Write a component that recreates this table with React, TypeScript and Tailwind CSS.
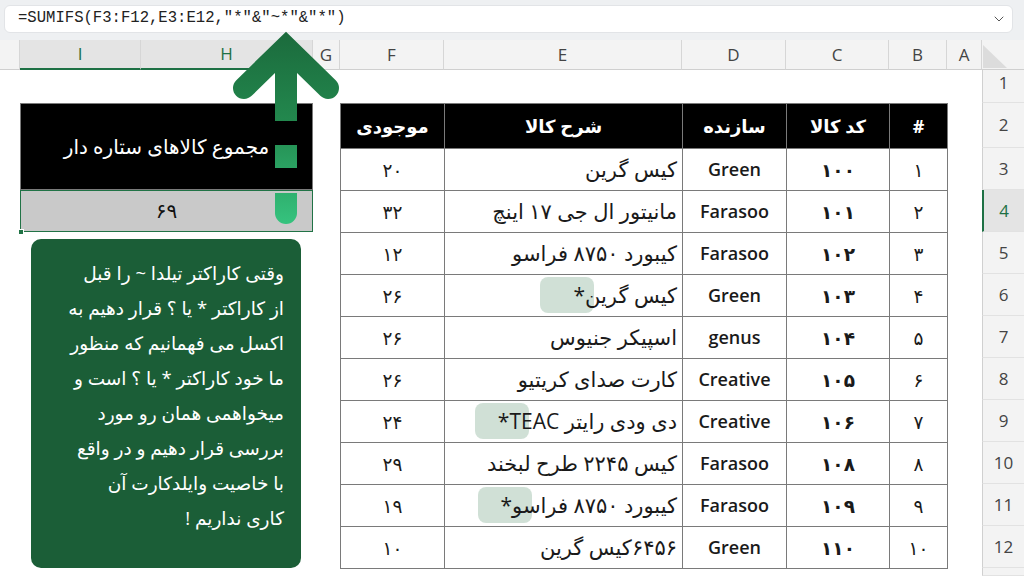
import { ChevronDown } from "lucide-react";

const cols = ["", "I", "H", "G", "F", "E", "D", "C", "B", "A"];
const selectedCols = ["I", "H"];

const rows = [
  { n: "۱", code: "۱۰۰", maker: "Green", desc: "کیس گرین", qty: "۲۰" },
  { n: "۲", code: "۱۰۱", maker: "Farasoo", desc: "مانیتور ال جی ۱۷ اینچ", qty: "۳۲" },
  { n: "۳", code: "۱۰۲", maker: "Farasoo", desc: "کیبورد ۸۷۵۰ فراسو", qty: "۱۲" },
  { n: "۴", code: "۱۰۳", maker: "Green", desc: "کیس گرین*", qty: "۲۶", mark: -33 },
  { n: "۵", code: "۱۰۴", maker: "genus", desc: "اسپیکر جنیوس", qty: "۲۶" },
  { n: "۶", code: "۱۰۵", maker: "Creative", desc: "کارت صدای کریتیو", qty: "۲۶" },
  { n: "۷", code: "۱۰۶", maker: "Creative", desc: "دی ودی رایتر TEAC*", qty: "۲۴", mark: -23 },
  { n: "۸", code: "۱۰۸", maker: "Farasoo", desc: "کیس ۲۲۴۵ طرح لبخند", qty: "۲۹" },
  { n: "۹", code: "۱۰۹", maker: "Farasoo", desc: "کیبورد ۸۷۵۰ فراسو*", qty: "۱۹", mark: -22 },
  { n: "۱۰", code: "۱۱۰", maker: "Green", desc: "۶۴۵۶کیس گرین", qty: "۱۰" },
];

const note = [
  "وقتی کاراکتر تیلدا ~ را قبل",
  "از کاراکتر * یا ؟ قرار دهیم به",
  "اکسل می فهمانیم که منظور",
  "ما خود کاراکتر * یا ؟ است و",
  "میخواهمی همان رو مورد",
  "بررسی قرار دهیم و در واقع",
  "با خاصیت وایلدکارت آن",
  "کاری نداریم !",
];

const cell = "border border-[#7a7a7a] text-center align-middle";

const Arrow = () => (
  <svg className="absolute left-0 top-0 z-20 pointer-events-none" width="360" height="240" viewBox="0 0 360 240">
    <defs>
      <linearGradient id="ag" x1="0" y1="30" x2="0" y2="226" gradientUnits="userSpaceOnUse">
        <stop offset="0" stopColor="#1b6a3c" />
        <stop offset="0.5" stopColor="#238a4f" />
        <stop offset="1" stopColor="#36c47f" />
      </linearGradient>
    </defs>
    <polyline points="244,88 286,47 328,88" fill="none" stroke="url(#ag)" strokeWidth="22" strokeLinecap="round" strokeLinejoin="miter" />
    <rect x="275" y="56" width="22" height="65" fill="url(#ag)" />
    <rect x="275" y="145" width="22" height="23" fill="url(#ag)" />
    <path d="M275 193 H297 V213 A11 11 0 0 1 275 213 Z" fill="url(#ag)" />
  </svg>
);

export default function App() {
  return (
    <div className="relative w-[1024px] h-[576px] overflow-hidden bg-white font-['Open_Sans','DejaVu_Sans',sans-serif] text-[#1a1a1a]">
      {/* formula bar */}
      <div className="h-[40px] bg-[#eef0f2] pt-[5px] pl-[4px] pr-[11px]">
        <div className="h-[28px] bg-white rounded-md border border-[#e2e4e7] flex items-center pl-[13px] pr-[5px]">
          <span className="font-['Liberation_Mono',monospace] text-[15.6px] text-[#222]">
            =SUMIFS(F3:F12,E3:E12,"*"&"~*"&"*")
          </span>
          <ChevronDown className="ml-auto text-[#555]" size={16} strokeWidth={1.5} />
        </div>
      </div>

      <Arrow />

      {/* sheet */}
      <div className="grid grid-cols-[20px_121px_172px_27px_104px_238px_104px_103px_58px_35px_42px] grid-rows-[30px_33px_45px_repeat(10,42px)_8px]">
        {/* column headers */}
        {cols.map((c, i) => {
          const sel = selectedCols.includes(c);
          return (
            <div
              key={"h" + i}
              className={
                "row-start-1 flex items-center justify-center text-[17px] border-r border-[#d6d6d6] " +
                (sel
                  ? "bg-[#e4e4e4] text-[#1e7145] border-b-2 border-b-[#1e7145]"
                  : "bg-[#f3f3f3] text-[#444] border-b border-b-[#cfcfcf]")
              }
            >
              {c}
            </div>
          );
        })}
        <div className="row-start-1 col-start-11 bg-[#f3f3f3] border-b border-[#cfcfcf] relative">
          <svg className="absolute left-[1px] top-[5px]" width="24" height="24" viewBox="0 0 24 24">
            <path d="M0 0 L24 23 L0 23 Z" fill="#dcdcdc" />
          </svg>
        </div>

        {/* row headers */}
        {Array.from({ length: 13 }, (_, i) => {
          const n = i + 1;
          const sel = n === 4;
          return (
            <div
              key={"r" + n}
              style={{ gridRowStart: n + 1 }}
              className={
                "col-start-11 flex justify-center text-[17px] border-b border-[#e2e2e2] " +
                (n === 1 ? "items-start " : "items-center ") +
                (sel
                  ? "bg-[#e4e4e4] text-[#1e7145] border-l-2 border-l-[#1e7145]"
                  : "bg-[#f3f3f3] text-[#444] border-l border-l-[#d0d0d0]")
              }
            >
              {n <= 12 ? n : ""}
            </div>
          );
        })}

        {/* summary block */}
        <div className="col-start-2 col-span-2 row-start-3 row-span-2 bg-black border border-[#7a7a7a] flex items-center justify-center">
          <span dir="rtl" className="text-white text-[20px]">مجموع کالاهای ستاره دار</span>
        </div>
        <div className="col-start-2 col-span-2 row-start-5 relative bg-[#c9c9c9] border-[1.5px] border-[#217346] flex items-center justify-center">
          <span className="text-[20px] text-[#111]">۶۹</span>
          <div className="absolute left-[-3px] bottom-[-4px] w-[6px] h-[6px] bg-[#217346] border border-white" />
        </div>

        {/* note */}
        <div
          dir="rtl"
          className="col-start-2 col-span-2 row-start-6 row-span-8 mt-[7px] ml-[11px] mr-[12px] rounded-[10px] bg-[#1b5e37] pt-[16px] pr-[17px] text-white text-[18.5px] leading-[35px]"
        >
          {note.map((l, i) => (
            <div key={i}>{l}</div>
          ))}
        </div>

        {/* table */}
        <div className="col-start-5 col-span-5 row-start-3 row-span-11">
          <table className="w-full h-full table-fixed border-collapse border border-[#7a7a7a]">
            <colgroup>
              <col className="w-[104px]" />
              <col className="w-[238px]" />
              <col className="w-[104px]" />
              <col className="w-[103px]" />
              <col className="w-[58px]" />
            </colgroup>
            <thead>
              <tr className="h-[45px] bg-black text-white text-[18px] font-bold">
                <th dir="rtl" className={cell}>موجودی</th>
                <th dir="rtl" className={cell}>شرح کالا</th>
                <th dir="rtl" className={cell}>سازنده</th>
                <th dir="rtl" className={cell}>کد کالا</th>
                <th className={cell}>#</th>
              </tr>
            </thead>
            <tbody className="text-[18.5px]">
              {rows.map((r) => (
                <tr key={r.code} className="h-[42px]">
                  <td className={cell}>{r.qty}</td>
                  <td dir="rtl" className="border border-[#7a7a7a] text-right pr-[5px] align-middle text-[21px]">
                    <span className="relative inline-block">
                      {r.mark !== undefined && (
                        <span
                          style={{ left: r.mark }}
                          className="absolute top-[-3px] w-[54px] h-[36px] rounded-[8px] bg-[#a9c7b5]/55"
                        />
                      )}
                      <span className="relative">{r.desc}</span>
                    </span>
                  </td>
                  <td className={cell + " font-semibold text-[18px]"}>{r.maker}</td>
                  <td className={cell + " font-bold"}>{r.code}</td>
                  <td className={cell}>{r.n}</td>
                </tr>
              ))}
            </tbody>
          </table>
        </div>
      </div>
    </div>
  );
}
